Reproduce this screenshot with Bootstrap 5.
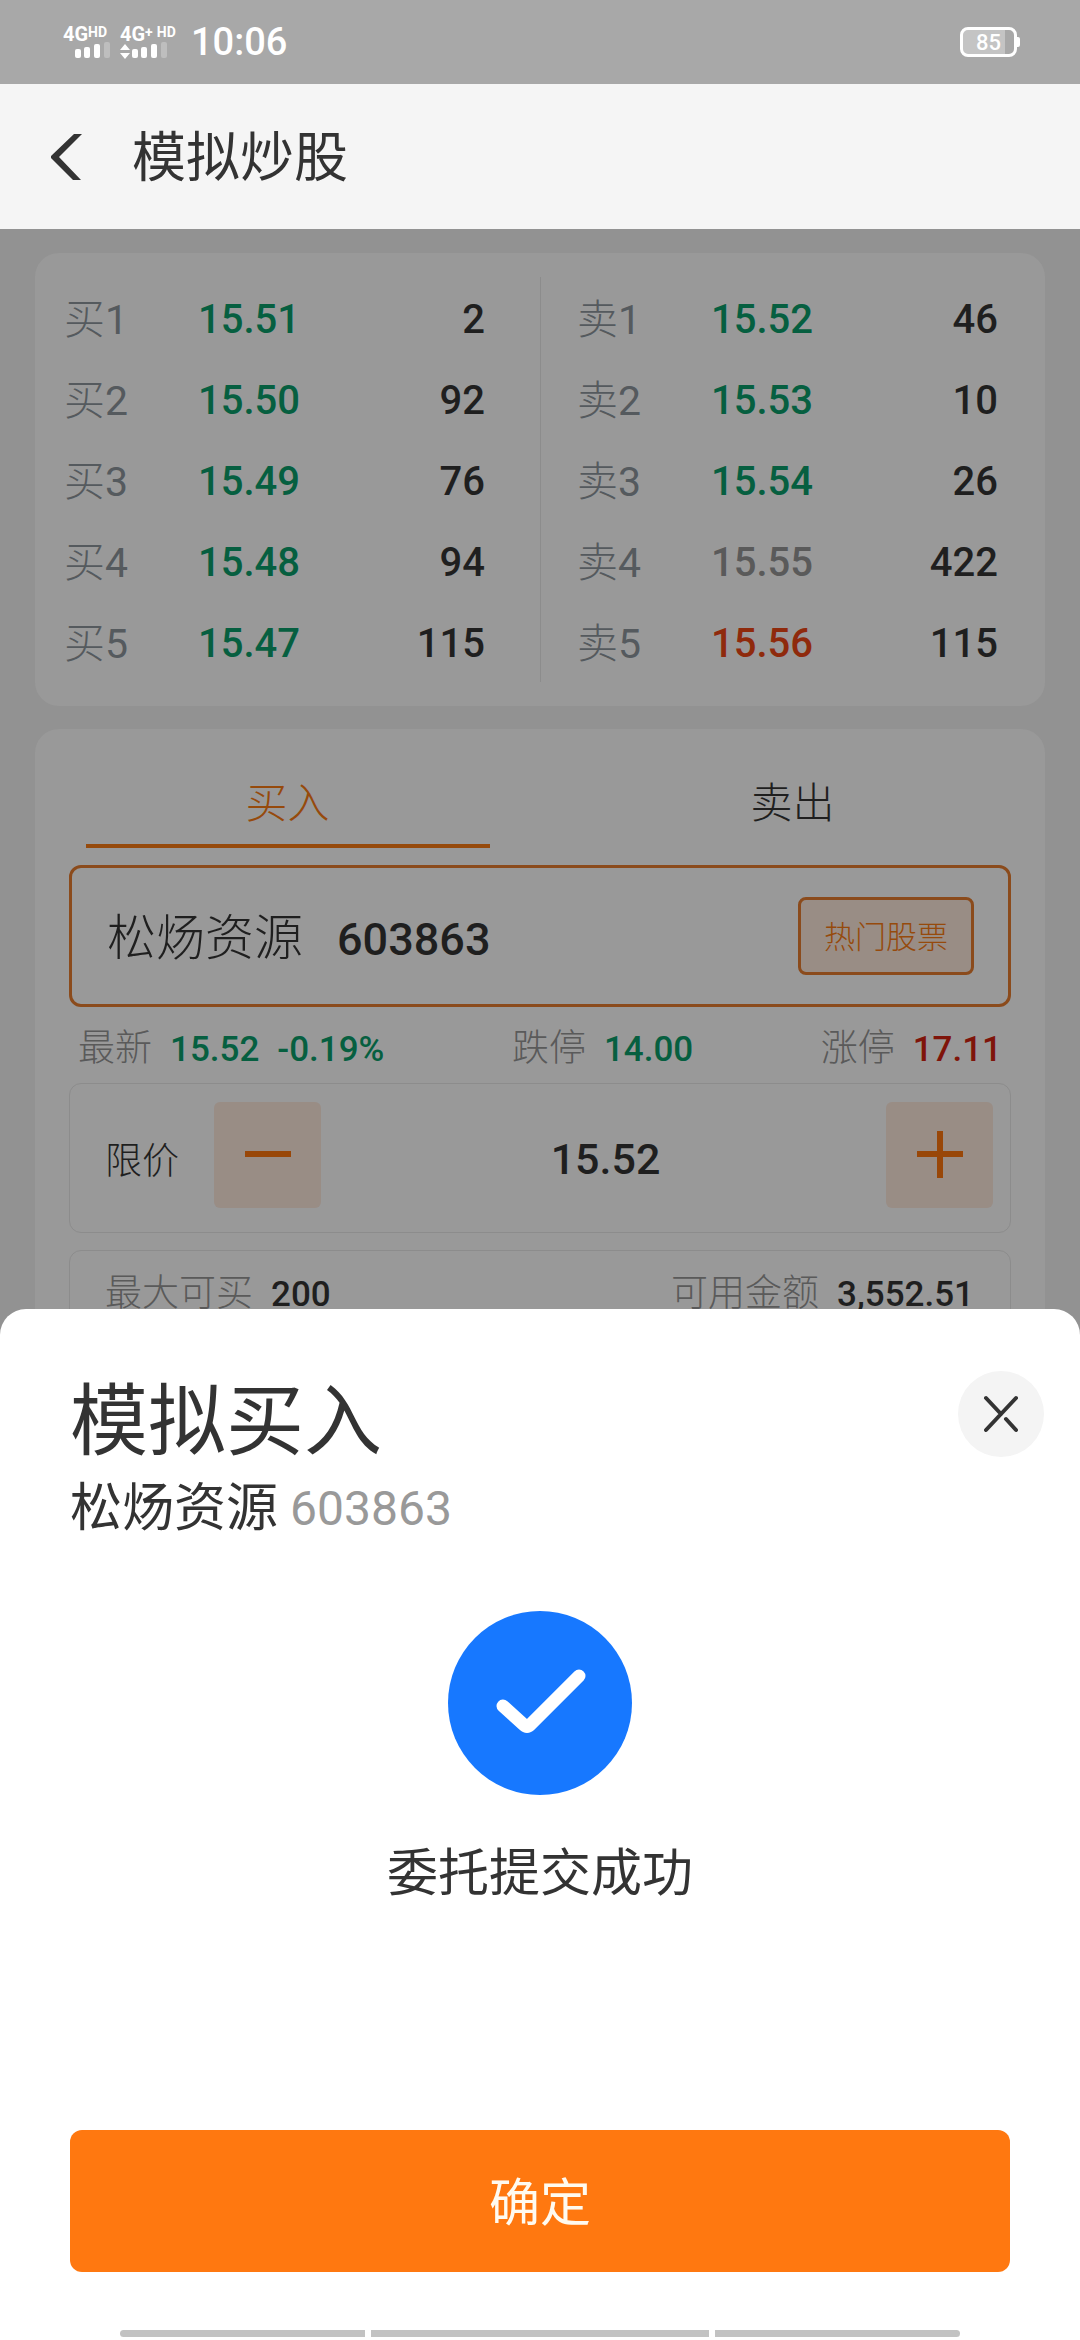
<!DOCTYPE html>
<html lang="zh-CN">
<head>
<meta charset="utf-8">
<meta name="viewport" content="width=device-width, initial-scale=1">
<title>模拟炒股</title>
<link href="https://cdn.jsdelivr.net/npm/bootstrap@5.3.0/dist/css/bootstrap.min.css" rel="stylesheet">
<style>
  :root { --ink: #1f1f1f; --muted: #5a5a5a; --down: #065f40; --up: #8f2a0c; --accent: #964a0c; --tint: #998d85; }
  body { font-family: Roboto, "Noto Sans CJK SC", sans-serif; background: #929292; color: var(--ink); font-size: 35px; line-height: 50px; font-weight: 300; }
  .num { font-weight: 500; }
  .down { color: var(--down); }
  .up { color: var(--up); }
  .limit-up { color: #7f140a; }
  .flat, .soft { color: var(--muted); }

  .status-bar { height: 84px; background: #a8a8a8; padding: 0 60px 0 63px; color: #fff; }
  .net-label { font-size: 20px; line-height: 16px; font-weight: 700; }
  .net-label small { font-size: 14px; line-height: 12px; font-weight: 700; }
  .net-one { width: 57px; }
  .net-two { width: 71px; }
  .clock { font-size: 38px; line-height: 48px; font-weight: 500; }
  .battery-box { width: 57px; height: 30px; border: 3px solid #fff; border-radius: 8px; font-size: 22px; line-height: 26px; font-weight: 500; background: linear-gradient(90deg, #c4c4c4 82%, #a8a8a8 82%); }
  .battery-tip { width: 3px; height: 10px; background: #fff; border-radius: 0 2px 2px 0; }

  .title-bar { height: 145px; background: #f5f5f5; color: #333; padding-left: 51px; }
  .title-bar h1 { font-size: 54px; line-height: 72px; font-weight: 400; margin-left: 47px; padding-top: 4px; }

  .panel { background: #999; border-radius: 24px; margin: 0 35px; }
  .depth { margin-top: 24px; margin-bottom: 23px; padding: 24px 0; }
  .depth table { font-size: 40px; line-height: 76px; }
  .depth td { padding: 5px 0 0; }
  .depth td:first-child { width: 134px; color: #555a5e; font-size: 41px; }
  .depth td:first-child .num { font-weight: 400; }
  .depth td:last-child { text-align: right; }
  .bids { padding: 0 55px 0 29px; }
  .asks { padding: 0 47px 0 36px; border-left: 1px solid #8c8c8c; }

  .tab-btn { border: 0; background: none; color: var(--ink); font-size: 42px; line-height: 60px; font-weight: 300; padding: 45px 0 12px; }
  .tab-btn::after { content: ""; display: block; width: 80%; height: 4px; margin: 10px auto 0; }
  .tab-btn.chosen { color: var(--accent); }
  .tab-btn.chosen::after { background: var(--accent); }
  .order-form { padding: 5px 34px 0; }
  .stock-box { height: 142px; border: 3px solid #8b4b1c; border-radius: 12px; padding: 0 34px 0 35px; }
  .stock-box .stock { font-size: 49px; gap: 34px; padding-top: 6px; }
  .stock-box .num { font-size: 45px; }
  .hot-btn { width: 176px; height: 78px; border: 3px solid #8b4b1c; border-radius: 8px; background: var(--tint); color: var(--accent); font-size: 31px; font-weight: 300; }
  .hot-btn span { display: block; padding-top: 3px; }
  .limits { height: 76px; padding: 8px 9px 0 9px; }
  .limits .soft, .funds .soft { font-size: 37px; margin-right: 18px; }
  .limits .change { margin-left: 18px; }
  .line-box { border: 1px solid #8c8c8c; border-radius: 12px; }
  .price-box { height: 150px; padding: 18px 17px 24px 35px; }
  .price-box label { width: 109px; padding-top: 13px; font-size: 37px; }
  .step-btn { width: 107px; height: 106px; border: 0; border-radius: 6px; background: var(--tint); }
  .price-input { min-width: 0; border: 0; background: none; color: var(--ink); font-size: 43px; text-align: center; padding: 8px 0 0 4px; }
  .funds { margin-top: 17px; height: 200px; padding: 18px 36px 0 35px; }

  .sheet { background: #fff; border-radius: 26px 26px 0 0; color: #333; font-weight: 400; }
  .sheet-head { padding: 62px 36px 0 70px; }
  .sheet-head h2 { font-size: 78px; line-height: 100px; font-weight: 400; padding-top: 2px; }
  .sheet-head p { font-size: 52px; line-height: 72px; gap: 12px; }
  .sheet-head .num { font-size: 48px; font-weight: 400; color: #999; }
  .close-btn { width: 86px; height: 86px; border: 0; background: #f4f4f4; }
  .done { padding: 66px 0 0; font-size: 51px; line-height: 72px; gap: 43px; }
  .ok-wrap { padding: 220px 70px 0; }
  .ok-btn { height: 142px; border: 0; border-radius: 12px; background: #ff7810; color: #fffaf0; font-size: 51px; font-weight: 400; padding: 5px 0 0; }
  .nav-hint { padding: 58px 120px 3px; gap: 6px; }
  .nav-hint span { height: 7px; background: #c2c2c2; flex: 245 1 0; }
  .nav-hint span:nth-child(2) { flex-grow: 338; }
  .nav-hint span:first-child { border-radius: 4px 0 0 4px; }
  .nav-hint span:last-child { border-radius: 0 4px 4px 0; }
</style>
</head>
<body class="vh-100 overflow-hidden d-flex flex-column">
  <div class="status-bar d-flex align-items-center justify-content-between flex-shrink-0">
    <div class="d-flex align-items-center">
      <div class="net-one">
        <div class="net-label d-flex align-items-start">4G<small>HD</small></div>
        <svg class="d-block" width="50" height="17" viewBox="0 0 50 17" fill="#fff" aria-hidden="true"><rect x="12" y="7" width="6" height="9" rx="2"/><rect x="21" y="5" width="6" height="11" rx="2"/><rect x="31" y="2" width="6" height="14" rx="2"/><rect x="41" y="0" width="6" height="16" rx="2" opacity=".25"/></svg>
      </div>
      <div class="net-two">
        <div class="net-label d-flex align-items-start">4G<small>+</small><small class="ms-1">HD</small></div>
        <svg class="d-block" width="50" height="17" viewBox="0 0 50 17" fill="#fff" aria-hidden="true"><path d="M0 8 5 2l5 6zM0 11h10l-5 6z"/><rect x="12" y="7" width="6" height="9" rx="2"/><rect x="21" y="5" width="6" height="11" rx="2"/><rect x="31" y="2" width="6" height="14" rx="2"/><rect x="41" y="0" width="6" height="16" rx="2" opacity=".25"/></svg>
      </div>
      <span class="clock">10:06</span>
    </div>
    <div class="d-flex align-items-center">
      <div class="battery-box text-center">85</div>
      <div class="battery-tip"></div>
    </div>
  </div>

  <header class="title-bar d-flex align-items-center flex-shrink-0">
    <a href="#" aria-label="返回"><svg class="d-block" width="34" height="48" viewBox="0 0 34 48"><path d="M23 1h8L8 24l22 23h-8L0 25v-2z" fill="#333"/></svg></a>
    <h1 class="mb-0">模拟炒股</h1>
  </header>

  <main class="flex-grow-1 d-flex flex-column overflow-hidden">
    <section class="panel depth row g-0 flex-shrink-0">
      <div class="col-6 bids">
        <table class="w-100">
          <tr><td>买<span class="num">1</span></td><td class="num down">15.51</td><td class="num">2</td></tr>
          <tr><td>买<span class="num">2</span></td><td class="num down">15.50</td><td class="num">92</td></tr>
          <tr><td>买<span class="num">3</span></td><td class="num down">15.49</td><td class="num">76</td></tr>
          <tr><td>买<span class="num">4</span></td><td class="num down">15.48</td><td class="num">94</td></tr>
          <tr><td>买<span class="num">5</span></td><td class="num down">15.47</td><td class="num">115</td></tr>
        </table>
      </div>
      <div class="col-6 asks">
        <table class="w-100">
          <tr><td>卖<span class="num">1</span></td><td class="num down">15.52</td><td class="num">46</td></tr>
          <tr><td>卖<span class="num">2</span></td><td class="num down">15.53</td><td class="num">10</td></tr>
          <tr><td>卖<span class="num">3</span></td><td class="num down">15.54</td><td class="num">26</td></tr>
          <tr><td>卖<span class="num">4</span></td><td class="num flat">15.55</td><td class="num">422</td></tr>
          <tr><td>卖<span class="num">5</span></td><td class="num up">15.56</td><td class="num">115</td></tr>
        </table>
      </div>
    </section>

    <section class="panel flex-grow-1">
      <div class="d-flex">
        <button type="button" class="tab-btn chosen w-50">买入</button>
        <button type="button" class="tab-btn w-50">卖出</button>
      </div>
      <div class="order-form">
        <div class="stock-box d-flex align-items-center justify-content-between">
          <div class="stock d-flex align-items-baseline"><span>松炀资源</span><span class="num">603863</span></div>
          <button type="button" class="hot-btn p-0"><span>热门股票</span></button>
        </div>
        <div class="limits d-flex align-items-center justify-content-between">
          <div><span class="soft">最新</span><span class="num down">15.52</span><span class="num down change">-0.19%</span></div>
          <div><span class="soft">跌停</span><span class="num down">14.00</span></div>
          <div><span class="soft">涨停</span><span class="num limit-up">17.11</span></div>
        </div>
        <div class="line-box price-box d-flex align-items-center">
          <label for="price">限价</label>
          <button type="button" class="step-btn p-0 flex-shrink-0" aria-label="减"><svg class="d-block mx-auto" width="46" height="48" viewBox="0 0 46 48"><path d="M0 23h46" stroke="#994708" stroke-width="6"/></svg></button>
          <input id="price" class="price-input num flex-grow-1" type="text" value="15.52">
          <button type="button" class="step-btn p-0 flex-shrink-0" aria-label="加"><svg class="d-block mx-auto" width="46" height="48" viewBox="0 0 46 48"><path d="M0 23h46M23 0v47" stroke="#994708" stroke-width="6"/></svg></button>
        </div>
        <div class="line-box funds d-flex justify-content-between align-items-start">
          <div><span class="soft">最大可买</span><span class="num">200</span></div>
          <div><span class="soft">可用金额</span><span class="num">3,552.51</span></div>
        </div>
      </div>
    </section>
  </main>

  <section class="sheet fixed-bottom" role="dialog" aria-labelledby="sheet-title">
    <div class="sheet-head d-flex justify-content-between align-items-start">
      <div>
        <h2 id="sheet-title" class="mb-0">模拟买入</h2>
        <p class="mb-0 d-flex align-items-center"><span>松炀资源</span><span class="num">603863</span></p>
      </div>
      <button type="button" class="close-btn rounded-circle p-0" aria-label="关闭"><svg class="d-block mx-auto" width="36" height="38" viewBox="0 0 36 38" fill="none" stroke="#333" stroke-width="4" stroke-linecap="round"><path d="M3 3 18 19M33 3 3 35M23 24 33 35"/></svg></button>
    </div>
    <div class="done d-flex flex-column align-items-center">
      <svg width="184" height="184" viewBox="0 0 184 184"><circle cx="92" cy="92" r="92" fill="#1778ff"/><path d="M55 95 76 114Q79 117 82 114L131 65" fill="none" stroke="#fff" stroke-width="13" stroke-linecap="round" stroke-linejoin="round"/></svg>
      <div>委托提交成功</div>
    </div>
    <div class="ok-wrap"><button type="button" class="ok-btn w-100 d-block">确定</button></div>
    <div class="nav-hint d-flex"><span></span><span></span><span></span></div>
  </section>
<script src="https://cdn.jsdelivr.net/npm/bootstrap@5.3.0/dist/js/bootstrap.bundle.min.js"></script>
</body>
</html>
